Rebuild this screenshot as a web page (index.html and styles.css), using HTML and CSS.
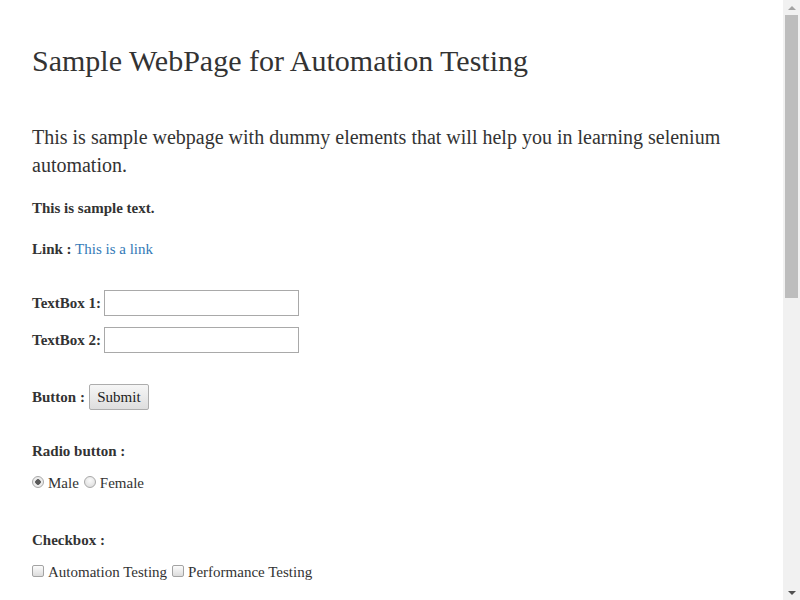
FILE: index.html
```html
<!DOCTYPE html>
<html>
<head>
<meta charset="utf-8">
<title>Sample WebPage for Automation Testing</title>
<link rel="stylesheet" href="styles.css">
</head>
<body>
<div class="window">
  <main class="page">
    <h1 class="title">Sample WebPage for Automation Testing</h1>
    <p class="lead">This is sample webpage with dummy elements that will help you in learning selenium automation.</p>
    <p class="sample"><b>This is sample text.</b></p>
    <p class="link-row"><b>Link :</b> <a href="#" class="link">This is a link</a></p>
    <div class="field first"><b>TextBox 1:</b><input class="textbox" type="text"></div>
    <div class="field second"><b>TextBox 2:</b><input class="textbox" type="text"></div>
    <div class="button-row"><b>Button :</b><button class="btn">Submit</button></div>
    <p class="section-label"><b>Radio button :</b></p>
    <div class="choice-row"><span class="radio checked"></span><span class="opt">Male</span><span class="radio"></span><span class="opt">Female</span></div>
    <p class="section-label check-label"><b>Checkbox :</b></p>
    <div class="choice-row"><span class="checkbox"></span><span class="opt">Automation Testing</span><span class="checkbox"></span><span class="opt">Performance Testing</span></div>
  </main>
  <div class="scrollbar">
    <div class="arrow up"></div>
    <div class="track"><div class="thumb"></div></div>
    <div class="arrow down"></div>
  </div>
</div>
</body>
</html>
```
FILE: styles.css
```css
html, body { margin: 0; padding: 0; height: 100%; overflow: hidden; }
body { font-family: "Liberation Serif", "Times New Roman", serif; color: #333; background: #fff; font-size: 15px; line-height: 20px; }
.window { display: flex; height: 600px; width: 800px; }
.page { flex: 1; padding: 0 32px; overflow: hidden; }
.title { font-size: 30px; font-weight: normal; line-height: 33px; margin: 44px 0 0; }
.lead { font-size: 20px; line-height: 28px; margin: 46px 0 0; }
p { margin: 0; }
.sample { margin-top: 19px; }
.link-row { margin-top: 21px; }
.link { color: #337ab7; text-decoration: none; }
.field { display: flex; align-items: center; height: 26px; }
.field.first { margin-top: 31px; }
.field.second { margin-top: 11px; }
.textbox { width: 195px; height: 26px; box-sizing: border-box; border: 1px solid #a9a9a9; margin: 0 0 0 3px; padding: 0 2px; font: inherit; }
.button-row { display: flex; align-items: center; height: 26px; margin-top: 31px; }
.btn { margin-left: 4px; height: 26px; width: 60px; box-sizing: border-box; border: 1px solid #adadad; border-radius: 2px; background: linear-gradient(#f6f6f6, #dedede); font-family: "Liberation Serif", serif; font-size: 15px; color: #222; padding: 0; }
.section-label { margin-top: 31px; }
.check-label { margin-top: 37px; }
.choice-row { display: flex; align-items: center; margin-top: 12px; height: 20px; }
.opt { margin: 0 5px 0 4px; }
.radio { width: 12px; height: 12px; box-sizing: border-box; border-radius: 50%; border: 1px solid #a8a8a8; background: radial-gradient(circle at 50% 35%, #fafafa, #d8d8d8); margin: 0; position: relative; top: -1px; }
.radio.checked { background: radial-gradient(circle, #595959 0 2.5px, #ececec 3px); }
.checkbox { width: 12px; height: 12px; box-sizing: border-box; border-radius: 2px; border: 1px solid #a3a3a3; background: linear-gradient(#fcfcfc, #dcdcdc); margin: 0; position: relative; top: -1px; }
.scrollbar { width: 17px; background: #f1f1f1; display: flex; flex-direction: column; }
.arrow { height: 15px; display: flex; justify-content: center; align-items: center; }
.arrow.up::before { content: ""; border-left: 4px solid transparent; border-right: 4px solid transparent; border-bottom: 4px solid #a3a3a3; }
.arrow.down::before { content: ""; border-left: 4px solid transparent; border-right: 4px solid transparent; border-top: 4px solid #505050; }
.track { flex: 1; padding: 0 2px; }
.thumb { height: 283px; background: #bdbdbd; }
```
